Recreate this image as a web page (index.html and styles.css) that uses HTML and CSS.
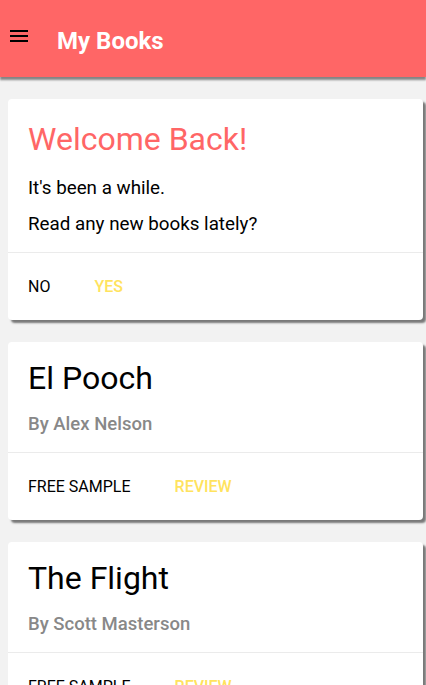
FILE: index.html
```html
<!DOCTYPE html>
<html lang="en">
<head>
<meta charset="utf-8">
<title>My Books</title>
<link rel="stylesheet" href="styles.css">
</head>
<body>
<header class="appbar">
  <svg class="menu-icon" width="18" height="12" viewBox="0 0 18 12" aria-hidden="true">
    <rect x="0" y="0" width="18" height="2" fill="#000"/>
    <rect x="0" y="5" width="18" height="2" fill="#000"/>
    <rect x="0" y="10" width="18" height="2" fill="#000"/>
  </svg>
  <h1 class="appbar-title">My Books</h1>
</header>
<main class="content">
  <section class="card">
    <div class="card-body">
      <h2 class="card-title accent">Welcome Back!</h2>
      <p class="card-text first">It's been a while.</p>
      <p class="card-text">Read any new books lately?</p>
    </div>
    <div class="card-actions">
      <span class="btn">NO</span>
      <span class="btn primary">YES</span>
    </div>
  </section>
  <section class="card">
    <div class="card-body">
      <h2 class="card-title book">El Pooch</h2>
      <p class="card-author">By Alex Nelson</p>
    </div>
    <div class="card-actions">
      <span class="btn">FREE SAMPLE</span>
      <span class="btn primary">REVIEW</span>
    </div>
  </section>
  <section class="card">
    <div class="card-body">
      <h2 class="card-title book">The Flight</h2>
      <p class="card-author">By Scott Masterson</p>
    </div>
    <div class="card-actions">
      <span class="btn">FREE SAMPLE</span>
      <span class="btn primary">REVIEW</span>
    </div>
  </section>
</main>
</body>
</html>
```
FILE: styles.css
```css
html, body {
  margin: 0;
  padding: 0;
  height: 100%;
  overflow: hidden;
}
body {
  background: #f2f2f2;
  font-family: Roboto, "Liberation Sans", Arial, sans-serif;
  color: #000;
}
.appbar {
  position: relative;
  z-index: 2;
  height: 77px;
  box-sizing: border-box;
  background: #ff6666;
  display: flex;
  align-items: flex-start;
  padding: 27px 0 0 10px;
  box-shadow: 0 3px 2px rgba(0, 0, 0, 0.45);
}
.menu-icon {
  display: block;
  margin-top: 3px;
}
.appbar-title {
  margin: 0 0 0 29px;
  font-size: 24px;
  line-height: 28px;
  font-weight: 700;
  color: #fff;
}
.content {
  display: flex;
  flex-direction: column;
  gap: 22px;
  padding: 22px 3px 0 8px;
}
.card {
  background: #fff;
  border-radius: 4px;
  box-shadow: 3px 3px 2px rgba(0, 0, 0, 0.5);
}
.card-body {
  padding: 20px 20px 16px;
  border-bottom: 1px solid #ebebeb;
}
.card-title {
  margin: 0;
  font-size: 32px;
  font-weight: 400;
  line-height: 40px;
}
.card-title.accent {
  color: #ff6666;
  margin-bottom: 17px;
}
.card-title.book {
  color: #000;
  margin-top: -4px;
  margin-bottom: 14px;
}
.card-text {
  margin: 0;
  font-size: 18.8px;
  line-height: 24px;
}
.card-text.first {
  margin-bottom: 12px;
}
.card-author {
  margin: 0;
  font-size: 18.5px;
  line-height: 24px;
  font-weight: 500;
  color: #888;
}
.card-actions {
  display: flex;
  gap: 44px;
  padding: 24px 20px 23px;
}
.btn {
  font-size: 16px;
  line-height: 20px;
  color: #000;
}
.btn.primary {
  color: #ffe35e;
  font-weight: 500;
}
```
